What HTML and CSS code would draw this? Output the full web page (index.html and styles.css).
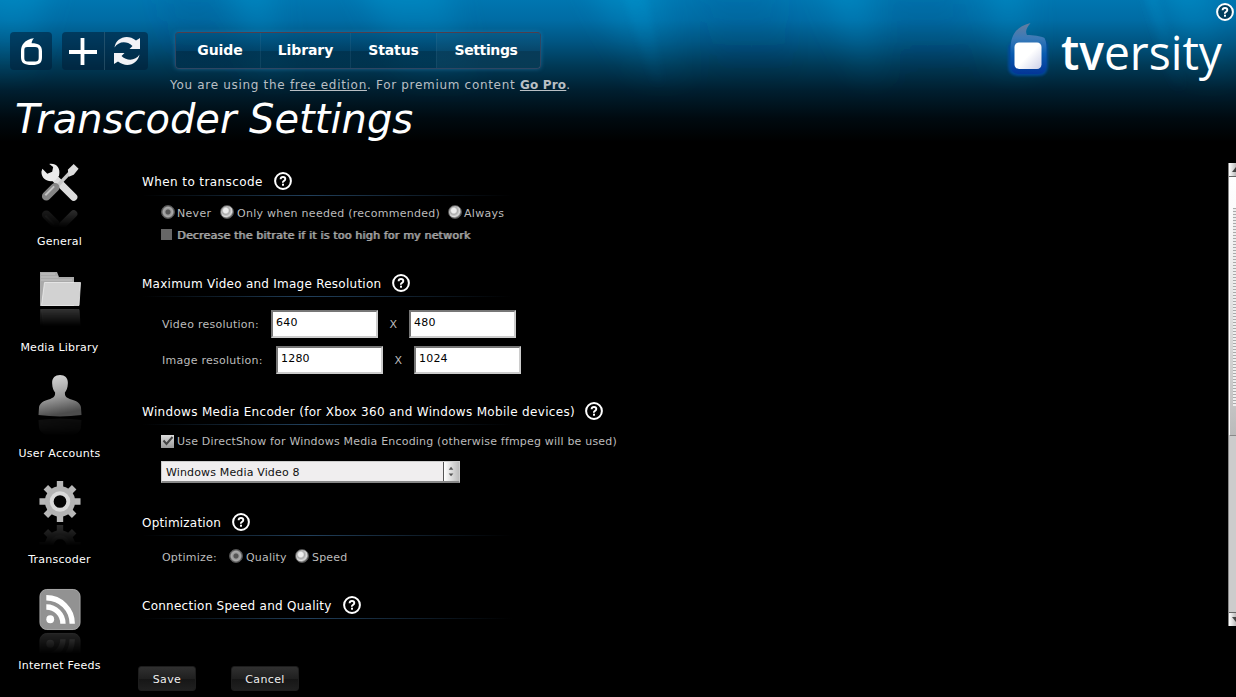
FILE: index.html
```html
<!DOCTYPE html>
<html lang="en">
<head>
<meta charset="utf-8">
<title>Transcoder Settings</title>
<link rel="stylesheet" href="styles.css">
</head>
<body>
<svg width="0" height="0" class="defs">
  <defs>
    <symbol id="help" viewBox="0 0 18 18"><circle cx="9" cy="9" r="7.9" fill="#000" fill-opacity=".45" stroke="#fff" stroke-width="2"/><path d="M6.600 7.300Q6.700 5 9 5t2.300 2q0 1.100-1.300 1.800T9 10.800" fill="none" stroke="#fff" stroke-width="1.900"/><rect x="8" y="11.700" width="2" height="2" fill="#fff"/></symbol>
  </defs>
</svg>
<header class="header">
  <svg class="rays" viewBox="0 0 1236 150" preserveAspectRatio="none">
    <defs>
      <filter id="soft" filterUnits="userSpaceOnUse" x="-60" y="-60" width="1360" height="260"><feGaussianBlur stdDeviation="14 10"/></filter>
      <filter id="crisp" filterUnits="userSpaceOnUse" x="-60" y="-60" width="1360" height="260"><feGaussianBlur stdDeviation="3 4"/></filter>
      <linearGradient id="ray" gradientUnits="userSpaceOnUse" x1="0" y1="0" x2="0" y2="95"><stop offset="0" stop-color="#009cd4" stop-opacity=".4"/><stop offset=".5" stop-color="#0090cc" stop-opacity=".14"/><stop offset="1" stop-color="#0080c0" stop-opacity="0"/></linearGradient>
      <linearGradient id="shade" gradientUnits="userSpaceOnUse" x1="0" y1="0" x2="0" y2="90"><stop offset="0" stop-color="#004a88" stop-opacity=".15"/><stop offset="1" stop-color="#001830" stop-opacity="0"/></linearGradient>
    </defs>
    <g filter="url(#soft)">
      <path fill="url(#ray)" d="M-20-30H50L30 80H-20zM230-30h35l30 130h-35zM355-30h85l40 130h-70zM585-30h65l60 170h-50zM990-30h30l15 110h-40zM1160-30h40l40 130h-50zM820-30h40l30 130h-30z"/>
      <path fill="url(#shade)" d="M690-30h80l40 160h-70zM880-30h80l10 160h-70zM160-30h60l20 140h-60z"/>
    </g>
    <path filter="url(#crisp)" fill="url(#ray)" opacity=".6" d="M618-20h25l22 105h-12zM1140-20h12l35 110h-15z"/>
  </svg>
  <div class="header-main">
    <div class="topbar">
      <div class="tool-group">
        <svg class="tool" viewBox="0 0 42 38"><path fill="#fff" fill-rule="evenodd" d="M24 6.200c-1.700 1.800-2.500 3.600-2.300 5.100 6.900 0 10.300 2.200 10.300 8V25c0 6-2.500 8-10.200 8S11 31 11 25v-6c0-5.500 3.500-11.800 13-12.800zM17.500 15c-2.700 0-3.200 1-3.200 3.600v6.500c0 3.500.7 4.500 3.700 4.500h7c3 0 3.700-1 3.700-4.500v-6.500c0-2.600-1-3.600-3.700-3.600z"/></svg>
      </div>
      <div class="tool-group wide">
        <svg class="tool plus" viewBox="0 0 42 38"><path d="M20.500 6v27M7 20h28" stroke="#fff" stroke-width="3.800"/></svg>
        <svg class="tool" viewBox="0 0 42 38"><g fill="#f2f2f6"><path d="M9.500 15.500C11 6 22 1.500 31 8.500l4-2.500V17H24.500l3-3C21 8 13 10 9.500 15.500z"/><path d="M9.500 15.500C11 6 22 1.500 31 8.500l4-2.500V17H24.500l3-3C21 8 13 10 9.500 15.500z" transform="rotate(180 22 19)"/></g></svg>
      </div>
      <nav class="nav">
        <a class="guide">Guide</a><a class="library">Library</a><a class="status">Status</a><a class="settings">Settings</a>
      </nav>
    </div>
    <p class="notice">You are using the <u>free edition</u>. For premium content <b>Go Pro</b>.</p>
    <h1>Transcoder Settings</h1>
  </div>
  <div class="brand">
    <svg class="help"><use href="#help"/></svg>
    <svg class="logo" width="226" height="80" viewBox="1004 20 226 80">
      <defs>
        <linearGradient id="flame" x1="0" y1="0" x2="0" y2="1"><stop offset="0" stop-color="#667d9d"/><stop offset=".3" stop-color="#3a7ab8"/><stop offset=".6" stop-color="#085cb0"/><stop offset="1" stop-color="#033597"/></linearGradient>
        <linearGradient id="tile" x1="0" y1="0" x2="1" y2="1"><stop offset="0" stop-color="#fff"/><stop offset=".5" stop-color="#fff"/><stop offset="1" stop-color="#ccd0e8"/></linearGradient>
        <filter id="glow" x="-20%" y="-20%" width="140%" height="140%"><feGaussianBlur stdDeviation="1.200"/></filter>
      </defs>
      <path filter="url(#glow)" fill="#064ba4" opacity=".8" d="M1008 49c0-5 5-8 10-10h22c5 0 8 2 8 8v18c0 8-4 11-10 11h-18c-7 0-12-2-12-10z"/>
      <path fill="url(#flame)" d="M1030.500 23c-4 5-5.500 8-3.500 12 6 0 14 1 17.500 3 2 4 2 8 2 14v12c0 7-3 10-9 10h-17c-7 0-10-3-10-9V50c0-15 5-23 20-27z"/>
      <rect x="1014.500" y="42.500" width="27" height="26.500" rx="4.500" fill="url(#tile)"/>
      <text x="1061" y="70" textLength="161" lengthAdjust="spacingAndGlyphs" class="wordmark"><tspan class="wm-bold">tv</tspan>ersity</text>
    </svg>
  </div>
</header>
<div class="body">
  <aside class="sidebar">
    <a class="side-item"><svg class="side-icon" viewBox="0 0 44 44"><path d="M17 17l19 19" stroke="#dcdcdc" stroke-width="7.500" stroke-linecap="round"/><path fill="#ececec" d="M11 2c7-1 12 4 10 12l-4 5c-7 2-14-1-14-9l1-3 5 5 5-2 1-5z"/><path d="M16 28L33 10" stroke="#c8c8c8" stroke-width="3.500"/><path fill="#ddd" d="M30 8l6-6 5 5-5 6-5 2z"/><path d="M8 35l9-9" stroke="#858585" stroke-width="9" stroke-linecap="round"/><path d="M7 34l9-9" stroke="#c2c2c2" stroke-width="2"/></svg><span>General</span></a>
    <a class="side-item"><svg class="side-icon folder" viewBox="0 0 44 36"><path fill="#aaa" d="M2 1h17l2 5h15v29H2z"/><path d="M3 3h14M3 6h17M3 9h31" stroke="#c4c4c4"/><path fill="#d2d2d2" stroke="#eee" stroke-width=".8" d="M6.500 11.500h36L41 34.500H3.500z"/></svg><span>Media Library</span></a>
    <a class="side-item"><svg class="side-icon user" viewBox="0 0 44 44"><defs><linearGradient id="person" x1="0" y1="0" x2=".2" y2="1"><stop offset="0" stop-color="#ddd"/><stop offset=".6" stop-color="#999"/><stop offset="1" stop-color="#4c4c4c"/></linearGradient></defs><path fill="url(#person)" d="M22 1c5.500 0 8.500 3.500 8 9 0 4-1.500 7-3 9 0 4 1 5 5 6.500 7 2 11 4 11.500 9l.5 7.500Q22 45 0 42l.5-7.500c.5-5 4.500-7 11.500-9 4-1.500 5-2.500 5-6.500-1.500-2-3-5-3-9-.5-5.500 2.500-9 8-9z"/></svg><span>User Accounts</span></a>
    <a class="side-item"><svg class="side-icon" viewBox="0 0 44 44"><path d="M22 1v42M1 22h42M7.500 7.500l29 29M36.500 7.500l-29 29" stroke="#b8b8b8" stroke-width="6.500"/><circle cx="22" cy="22" r="15.500" fill="#b4b4b4"/><circle cx="22" cy="22" r="8.500" fill="#050505" stroke="#dadada" stroke-width="4"/></svg><span>Transcoder</span></a>
    <a class="side-item"><svg class="side-icon feed" viewBox="0 0 44 44"><rect x="1.500" y="1.500" width="41" height="41" rx="7" fill="#929292" stroke="#aaa"/><circle cx="12" cy="32" r="4" fill="#fff"/><path d="M8 19.500a17 17 0 0 1 17 17M8 10a26.500 26.500 0 0 1 26.500 26.500" fill="none" stroke="#fff" stroke-width="5.500"/></svg><span>Internet Feeds</span></a>
  </aside>
  <main class="main">
    <section class="s-when">
      <h2><span>When to transcode</span><svg class="help"><use href="#help"/></svg></h2>
      <div class="row radios"><i class="radio on"></i><label class="l-never">Never</label><i class="radio"></i><label class="l-only">Only when needed (recommended)</label><i class="radio"></i><label>Always</label></div>
      <div class="row decrease"><i class="check off"></i><label class="disabled">Decrease the bitrate if it is too high for my network</label></div>
    </section>
    <section class="s-resolution">
      <h2><span>Maximum Video and Image Resolution</span><svg class="help"><use href="#help"/></svg></h2>
      <div class="row fields"><label class="l-video">Video resolution:</label><input value="640"><span class="times">X</span><input value="480"></div>
      <div class="row fields"><label class="l-image">Image resolution:</label><input value="1280"><span class="times">X</span><input value="1024"></div>
    </section>
    <section class="s-encoder">
      <h2><span>Windows Media Encoder (for Xbox 360 and Windows Mobile devices)</span><svg class="help"><use href="#help"/></svg></h2>
      <div class="row encoder"><i class="check"><svg viewBox="0 0 13 13"><path d="M2.500 5.500l3 3.500 6-7" fill="none" stroke="#444" stroke-width="2"/></svg></i><label>Use DirectShow for Windows Media Encoding (otherwise ffmpeg will be used)</label></div>
      <div class="select"><span>Windows Media Video 8</span><svg class="spin" viewBox="0 0 16 20"><path fill="#555" d="M5 8l2.500-3L10 8zM5 12l2.500 3L10 12z"/></svg></div>
    </section>
    <section class="s-optimize">
      <h2><span>Optimization</span><svg class="help"><use href="#help"/></svg></h2>
      <div class="row optimize"><label class="l-optimize">Optimize:</label><i class="radio on"></i><label class="l-quality">Quality</label><i class="radio"></i><label>Speed</label></div>
    </section>
    <section class="s-speed">
      <h2><span>Connection Speed and Quality</span><svg class="help"><use href="#help"/></svg></h2>
    </section>
    <div class="actions"><button class="save">Save</button><button class="cancel">Cancel</button></div>
  </main>
  <div class="scrollbar"><i class="arrow up"></i><i class="thumb"><b></b></i><i class="track"></i><i class="arrow down"></i></div>
</div>
</body>
</html>
```

FILE: styles.css
```css
* { box-sizing: border-box; }
body { margin: 0; width: 1236px; height: 697px; overflow: hidden; background: #000; color: #fff; font-family: "DejaVu Sans", Verdana, sans-serif; }
.defs { position: absolute; }
.header { position: relative; display: flex; justify-content: space-between; height: 150px; background: linear-gradient(#0076b0 0, #006ca4 20px, #005582 42px, #003a57 65px, #001f30 90px, #000a10 118px, #000 142px); }
.rays { position: absolute; inset: 0; width: 100%; height: 100%; }
.header-main { position: relative; padding: 32px 0 0 10px; }
.topbar { display: flex; height: 38px; }
.tool-group { display: flex; width: 42px; height: 38px; border-radius: 4px; background: rgba(0,30,55,.55); margin-right: 10px; }
.tool-group.wide { width: 86px; margin-right: 27px; }
.tool { width: 42px; height: 38px; flex: none; }
.plus { width: 43px; border-right: 1px solid rgba(70,110,130,.45); }
.nav { display: flex; width: 366px; height: 37px; border: 1px solid #2e4663; border-top-color: #503e4c; border-radius: 4px; background: linear-gradient(rgba(0,80,125,.5) 0, rgba(0,55,90,.5) 50%, rgba(0,30,50,.5) 53%, rgba(0,45,70,.4)); box-shadow: 0 0 4px rgba(50,130,180,.55); }
.nav a { display: flex; align-items: center; justify-content: center; font-size: 14px; font-weight: bold; letter-spacing: -.1px; padding-bottom: 1px; border-left: 1px solid rgba(70,120,150,.2); }
.nav .guide { width: 84px; border: 0; padding-left: 4px; }
.nav .library { width: 90px; }
.nav .status { width: 86px; }
.nav .settings { flex: 1; background: rgba(90,150,180,.08); padding-right: 5px; letter-spacing: -.4px; }
.notice { margin: 6px 0 0 160px; font-size: 12px; line-height: 18px; color: #b9bfc4; letter-spacing: .69px; white-space: nowrap; }
.notice b { text-decoration: underline; letter-spacing: .2px; }
h1 { margin: 1px 0 0 5px; font-size: 40px; line-height: 48px; font-weight: normal; font-style: italic; white-space: nowrap; }
.brand { position: relative; display: flex; flex-direction: column; align-items: flex-end; padding: 3px 2px 0 0; }
.help { width: 18px; height: 18px; flex: none; }
.logo { margin: -1px 4px 0 0; overflow: visible; }
.wordmark { font-family: "Open Sans", "Noto Sans", sans-serif; font-size: 48px; font-weight: 400; fill: #fff; }
.wm-bold { font-weight: 600; }
.body { display: flex; height: 547px; }
.sidebar { width: 119px; padding-top: 12px; }
.side-item { display: flex; flex-direction: column; align-items: center; height: 106px; font-size: 11px; letter-spacing: .25px; white-space: nowrap; }
.side-item span { margin: auto 0 19px; line-height: 14px; }
.side-icon { width: 44px; height: 43px; -webkit-box-reflect: below 1px linear-gradient(transparent 50%, rgba(0,0,0,.25)); }
.side-icon.folder { height: 36px; margin-top: 3px; }
.side-icon.user { -webkit-box-reflect: below 1px linear-gradient(transparent 60%, rgba(0,0,0,.18)); }
.side-icon.feed { margin-top: 2px; }
.main { width: 1109px; padding: 15px 0 0 19px; }
section { padding-left: 4px; }
.s-when { height: 101px; }
.s-resolution { height: 128px; }
.s-encoder { height: 111px; }
.s-optimize { height: 83px; }
.s-speed { height: 78px; }
h2 { display: flex; align-items: center; gap: 11px; width: 370px; height: 31px; margin: 0; padding-top: 2px; font-size: 12px; line-height: 16px; font-weight: normal; letter-spacing: .32px; white-space: nowrap; background: linear-gradient(90deg, transparent, #21405c 45%, transparent) bottom / 100% 1px no-repeat; }
h2 span { padding-top: 2px; }
.s-when h2 { letter-spacing: .4px; padding-top: 1px; }
.s-resolution h2 { letter-spacing: .25px; }
.s-encoder h2 { gap: 10px; }
.s-optimize h2 { letter-spacing: .2px; }
.s-speed h2 { letter-spacing: .26px; }
.row { display: flex; align-items: center; padding-left: 19px; font-size: 11px; color: #bcbcbc; letter-spacing: .3px; white-space: nowrap; }
.radios { height: 32px; }
.radios label { padding: 3px 0 0; }
.radio { flex: none; width: 14px; height: 14px; margin-right: 2px; border-radius: 50%; border: 1px solid #555; background: radial-gradient(circle at 40% 38%, #eee 0 22%, #aaa 36%, #ddd 58%, #666 75%); }
.radio.on { background: radial-gradient(circle, #555 0 24%, #999 36%, #aaa 55%, #555 75%); }
.radios .l-never { width: 43px; }
.radios .l-only { width: 212px; letter-spacing: .27px; padding-left: 1px; }
.decrease { height: 13px; }
.check { flex: none; width: 13px; height: 13px; margin-right: 3px; background: linear-gradient(#ddd, #999); }
.check svg { display: block; }
.check.off { width: 11px; height: 11px; margin: 0 5px 0 0; background: #666; }
.disabled { padding-top: 2px; color: #aaa; text-shadow: 1px 0 0 #888; letter-spacing: .19px; }
.fields { height: 36px; padding-left: 20px; letter-spacing: .26px; }
.s-resolution h2 + .fields { margin-top: 9px; }
.l-video { width: 109px; }
.l-image { width: 114px; }
input { width: 107px; height: 28px; padding: 0 4px 3px 3px; border: 2px solid; border-color: #777 #ccc #ccc #777; background: #fff; color: #000; font: 11px "DejaVu Sans", sans-serif; letter-spacing: .2px; }
.times { width: 31px; text-align: center; font-size: 11px; }
.encoder { height: 33px; letter-spacing: .19px; }
.encoder .check { margin-right: 3px; }
.select { display: flex; align-items: center; justify-content: space-between; width: 299px; height: 22px; margin: 3px 0 0 19px; padding-left: 4px; background: #f0eeef; border: 1px solid #ccc; border-bottom: 2px solid #888; color: #111; font-size: 11px; line-height: 14px; letter-spacing: .15px; }
.select span { padding-top: 2px; }
.spin { width: 16px; height: 19px; border-left: 1px solid #555; background: linear-gradient(90deg, #fff, #bbb); }
.optimize { height: 42px; padding-left: 20px; letter-spacing: .2px; }
.optimize .radio { margin-top: -2px; }
.l-optimize { width: 67px; }
.l-quality { width: 50px; }
.optimize .radio + label { padding-left: 1px; }
.actions { display: flex; gap: 35px; }
button { height: 25px; margin: 0; padding: 1px 0 0; border: 1px solid #1d1d1d; border-radius: 3px; background: linear-gradient(#303030, #202020 50%, #161616 52%, #202020); color: #eee; font: 11px "DejaVu Sans", sans-serif; letter-spacing: .4px; }
.save { width: 58px; }
.cancel { width: 68px; }
.scrollbar { display: flex; flex-direction: column; width: 8px; height: 463px; margin-top: 13px; border-left: 1px solid #888; background: #ccc; }
.arrow { display: flex; align-items: center; justify-content: flex-end; height: 14px; background: linear-gradient(90deg, #fff, #bbb); border-bottom: 1px solid #666; overflow: hidden; }
.arrow::after { content: ""; border: 4px solid transparent; border-right: 0; border-bottom: 5px solid #444; border-top: 0; }
.arrow.down { border-bottom: 0; border-top: 1px solid #666; }
.arrow.down::after { border-bottom: 0; border-top: 5px solid #444; }
.thumb { display: block; height: 259px; padding: 31px 0 0 3px; background: linear-gradient(#fff, #fafafa 15%, #bbb); border-left: 1px solid #fff; border-bottom: 1px solid #888; }
.thumb b { display: block; height: 198px; background: repeating-linear-gradient(#aaa 0 1px, #eee 1px 3px); }
.track { flex: 1; background: #ccc; }
```
